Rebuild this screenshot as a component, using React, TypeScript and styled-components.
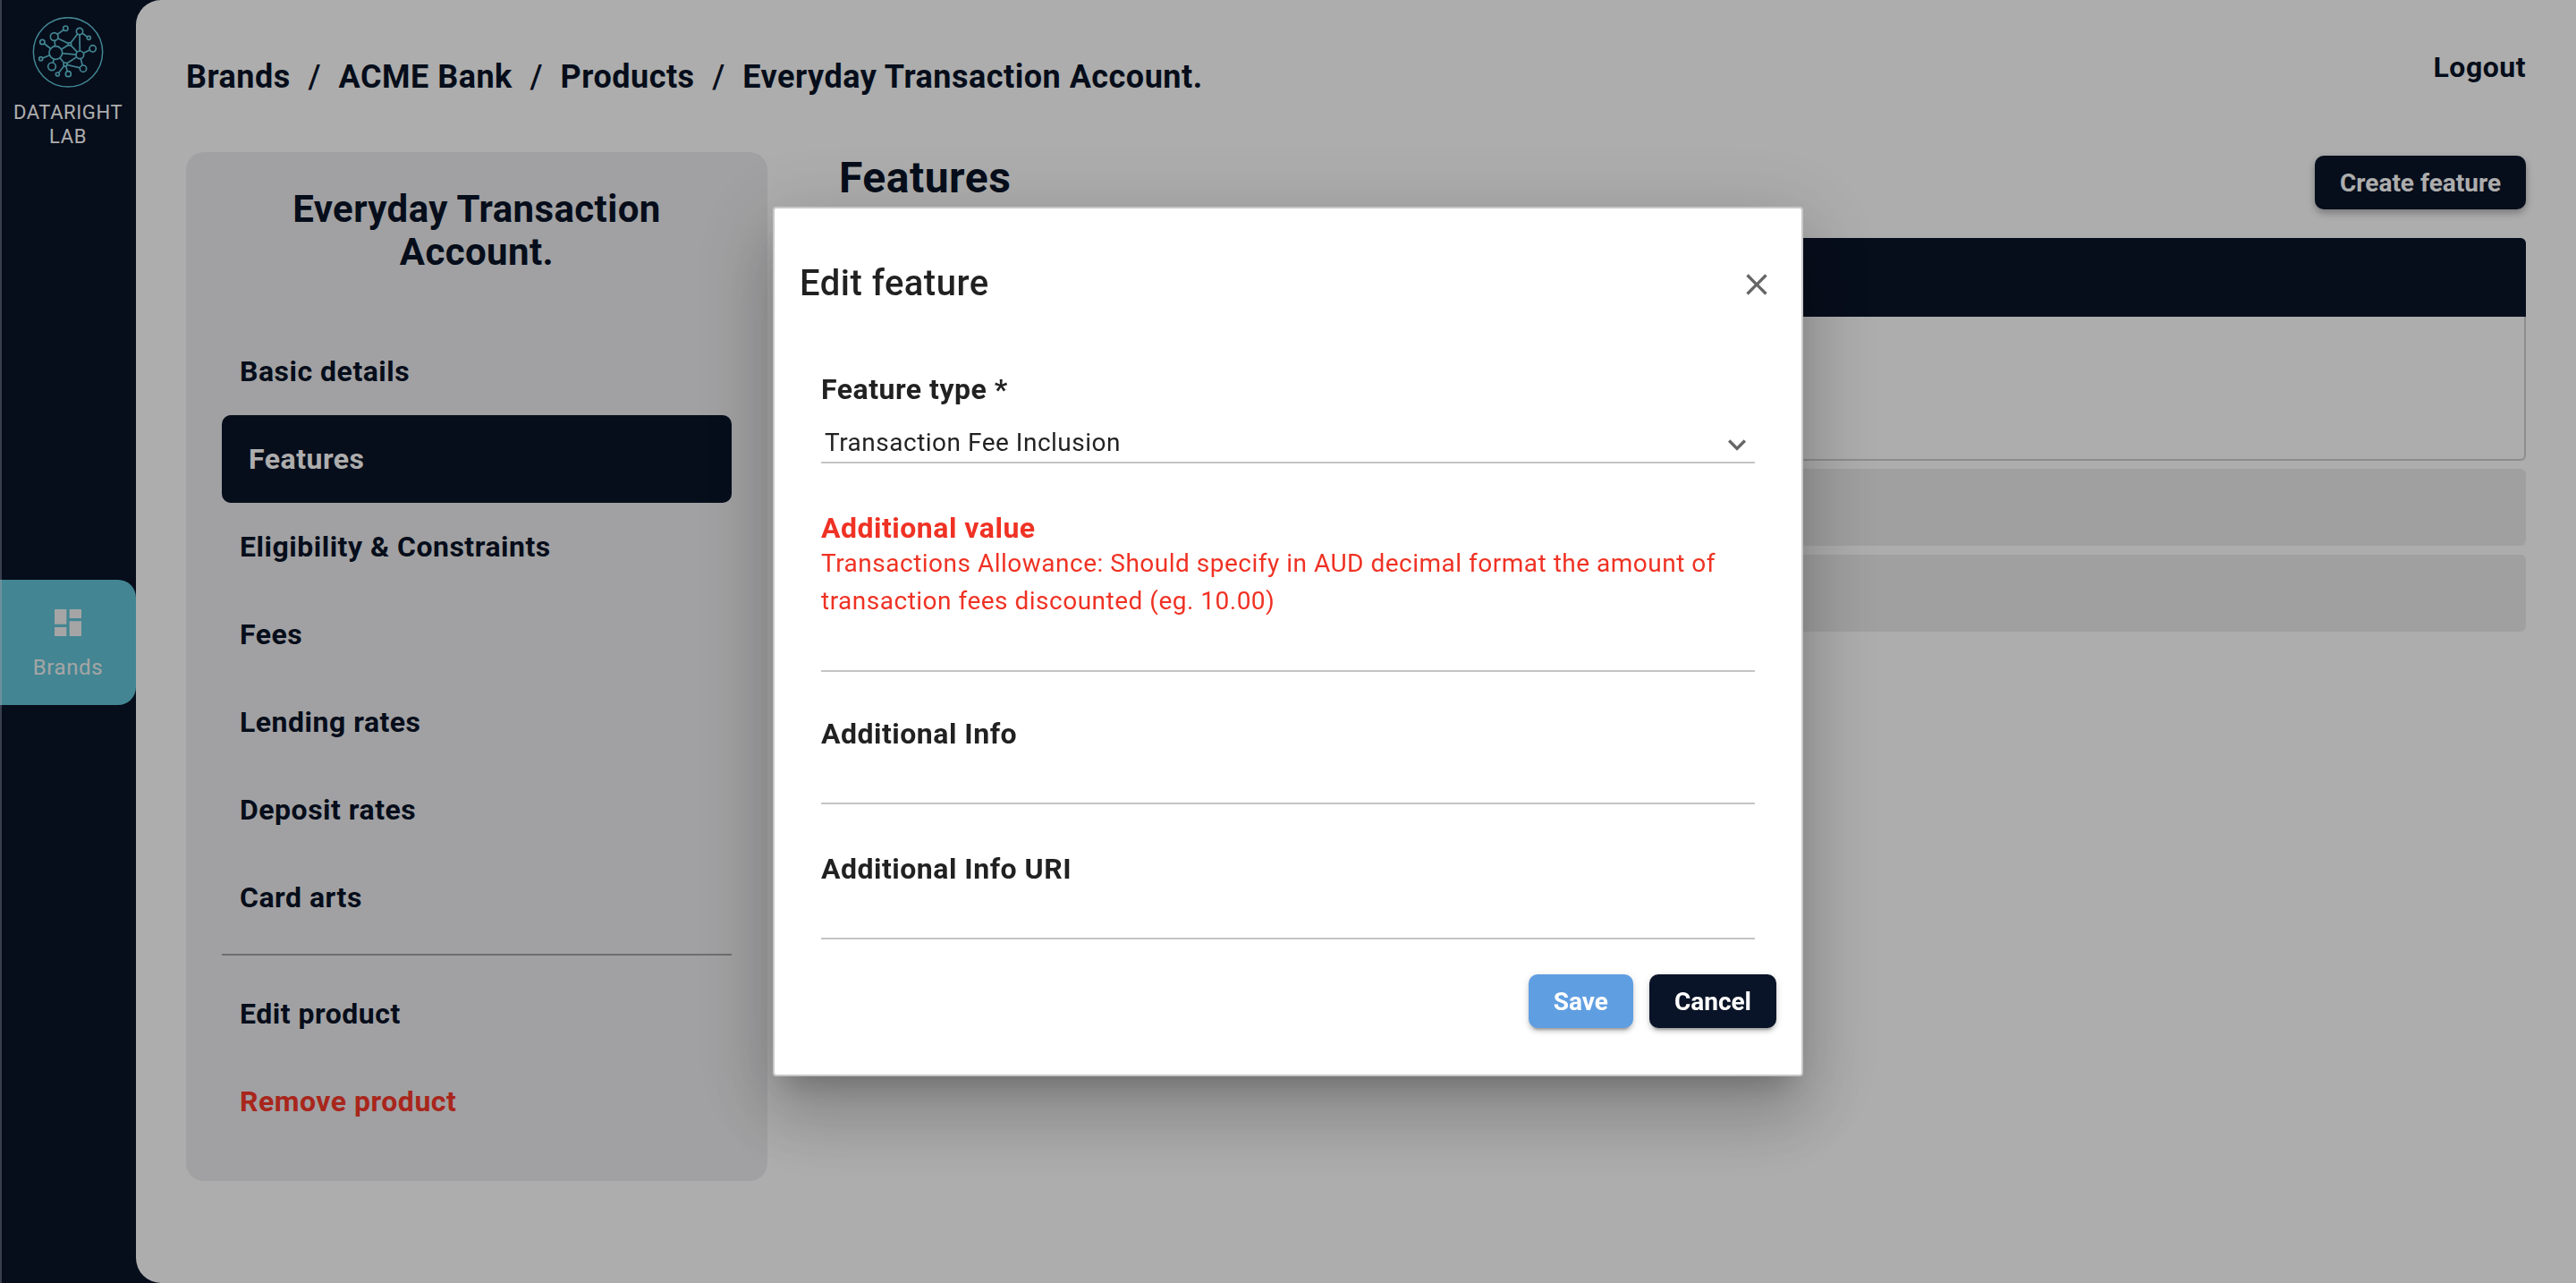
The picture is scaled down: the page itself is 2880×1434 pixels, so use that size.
import styled, { createGlobalStyle } from "styled-components";

const menuTop = ["Basic details", "Features", "Eligibility & Constraints", "Fees", "Lending rates", "Deposit rates", "Card arts"];
const crumbs = ["Brands", "ACME Bank", "Products", "Everyday Transaction Account."];

const Logo = () => {
  const nodes = [
    [187, 180, 22], [268, 187, 13], [182, 126, 13], [267, 108, 11], [220, 98, 8],
    [298, 130, 6], [311, 166, 11], [142, 144, 8], [137, 200, 6], [174, 226, 13],
    [219, 219, 6], [279, 233, 11], [229, 251, 9], [193, 252, 6], [234, 151, 5],
  ];
  const edges = [
    [187, 180, 234, 151], [182, 126, 234, 151], [182, 126, 220, 98], [267, 108, 234, 151],
    [267, 108, 268, 187], [267, 108, 298, 130], [142, 144, 187, 180], [137, 200, 187, 180],
    [187, 180, 268, 187], [234, 151, 268, 187], [268, 187, 311, 166], [268, 187, 219, 219],
    [268, 187, 279, 233], [219, 219, 279, 233], [219, 219, 193, 252], [219, 219, 229, 251],
    [187, 180, 219, 219], [182, 126, 187, 180], [174, 226, 187, 180],
  ];
  return (
    <LogoSvg viewBox="108 60 240 240">
      <circle cx="228" cy="178" r="116" fill="none" stroke="#63c5d8" strokeWidth="4.5" />
      {edges.map((e, i) => (
        <line key={i} x1={e[0]} y1={e[1]} x2={e[2]} y2={e[3]} stroke="#63c5d8" strokeWidth="5" />
      ))}
      {nodes.map((n, i) => (
        <circle key={i} cx={n[0]} cy={n[1]} r={n[2]} fill="#0a1428" stroke="#63c5d8" strokeWidth="5" />
      ))}
    </LogoSvg>
  );
};

const App = () => {
  return (
    <Page>
      <GlobalStyle />
      <SideBar>
        <Brand>
          <Logo />
          <BrandText>DATARIGHT LAB</BrandText>
        </Brand>
        <NavTile>
          <svg width="40" height="40" viewBox="0 0 24 24" fill="currentColor">
            <path d="M3 13h8V3H3v10zm0 8h8v-6H3v6zm10 0h8V11h-8v10zm0-18v6h8V3h-8z" />
          </svg>
          <span>Brands</span>
        </NavTile>
      </SideBar>
      <Main>
        <TopBar>
          <Crumbs>
            {crumbs.map((c, idx) => (
              <span key={c}>
                {idx > 0 && <Slash>/</Slash>}
                {c}
              </span>
            ))}
          </Crumbs>
          <Logout>Logout</Logout>
        </TopBar>
        <Body>
          <Panel>
            <PanelTitle>Everyday Transaction Account.</PanelTitle>
            {menuTop.map((m) => (
              <MenuItem key={m} $active={m === "Features"}>
                {m}
              </MenuItem>
            ))}
            <Divider />
            <MenuItem>Edit product</MenuItem>
            <MenuItem $danger>Remove product</MenuItem>
          </Panel>
          <Content>
            <ContentHead>
              <Heading>Features</Heading>
              <CreateButton>Create feature</CreateButton>
            </ContentHead>
            <TableHead />
            <TableBox />
            <CollapsedRow />
            <CollapsedRow />
          </Content>
        </Body>
      </Main>
      <Backdrop>
        <Dialog>
          <DialogHead>
            <DialogTitle>Edit feature</DialogTitle>
            <svg width="40" height="40" viewBox="0 0 24 24" fill="#666">
              <path d="M19 6.41 17.59 5 12 10.59 6.41 5 5 6.41 10.59 12 5 17.59 6.41 19 12 13.41 17.59 19 19 17.59 13.41 12z" />
            </svg>
          </DialogHead>
          <Form>
            <Field $top={0} $bottom={53}>
              <FieldLabel>Feature type *</FieldLabel>
              <SelectLine>
                <span>Transaction Fee Inclusion</span>
                <svg width="40" height="40" viewBox="0 0 24 24" fill="#666">
                  <path d="M16.59 8.59 12 13.17 7.41 8.59 6 10l6 6 6-6z" />
                </svg>
              </SelectLine>
            </Field>
            <Field $top={0} $bottom={0}>
              <FieldLabel $error>Additional value</FieldLabel>
              <HelpText>
                Transactions Allowance: Should specify in AUD decimal format the amount of transaction fees discounted
                (eg. 10.00)
              </HelpText>
              <InputLine $height={58} />
            </Field>
            <Field $top={50} $bottom={0}>
              <FieldLabel>Additional Info</FieldLabel>
              <InputLine $height={60} />
            </Field>
            <Field $top={53} $bottom={0}>
              <FieldLabel>Additional Info URI</FieldLabel>
              <InputLine $height={60} />
            </Field>
          </Form>
          <Actions>
            <DialogButton $primary>Save</DialogButton>
            <DialogButton>Cancel</DialogButton>
          </Actions>
        </Dialog>
      </Backdrop>
    </Page>
  );
};

const GlobalStyle = createGlobalStyle`
  html, body {
    margin: 0;
    padding: 0;
    height: 100%;
    font-family: Roboto, "Liberation Sans", sans-serif;
    background: #0a1428;
  }
  * {
    box-sizing: border-box;
  }
`;

const Page = styled.div`
  width: 2880px;
  height: 1434px;
  display: flex;
  overflow: hidden;
  background: #0a1428;
`;

const SideBar = styled.aside`
  width: 152px;
  flex: none;
  display: flex;
  flex-direction: column;
  border-left: 2px solid #555e70;
`;

const Brand = styled.div`
  display: flex;
  flex-direction: column;
  align-items: center;
  padding: 19px 2px 0 0;
  height: 648px;
`;

const LogoSvg = styled.svg`
  width: 80px;
  height: 80px;
`;

const BrandText = styled.div`
  margin-top: 13px;
  width: 140px;
  color: #fff;
  font-size: 22px;
  letter-spacing: 0.6px;
  line-height: 27px;
  text-align: center;
`;

const NavTile = styled.div`
  margin-left: -2px;
  width: 152px;
  height: 140px;
  padding: 28px 2px 0 0;
  border-left: 2px solid #9cd8e4;
  border-radius: 0 20px 20px 0;
  background: #63c5d8;
  color: #f4f4f4;
  display: flex;
  flex-direction: column;
  align-items: center;
  gap: 16px;
  font-size: 24px;
  letter-spacing: 0.6px;
  span {
    line-height: 28px;
  }
`;

const Main = styled.main`
  flex: 1;
  min-width: 0;
  background: #fff;
  border-radius: 28px 0 0 28px;
  padding: 0 56px;
`;

const TopBar = styled.header`
  height: 170px;
  display: flex;
  justify-content: space-between;
  color: #0a1428;
  font-weight: 700;
  letter-spacing: 0.5px;
`;

const Crumbs = styled.div`
  padding-top: 65px;
  font-size: 36px;
  line-height: 42px;
`;

const Slash = styled.span`
  margin: 0 19.6px;
  font-weight: 500;
`;

const Logout = styled.div`
  padding-top: 56px;
  font-size: 32px;
  line-height: 38px;
`;

const Body = styled.div`
  display: flex;
  gap: 80px;
`;

const Panel = styled.nav`
  width: 650px;
  height: 1150px;
  flex: none;
  padding: 40px;
  border-radius: 20px;
  background: #eeeef0;
`;

const PanelTitle = styled.h2`
  margin: 0 auto 60px;
  width: 480px;
  color: #0a1428;
  font-size: 42px;
  letter-spacing: 0.4px;
  line-height: 48px;
  font-weight: 700;
  text-align: center;
`;

const MenuItem = styled.div<{ $active?: boolean; $danger?: boolean }>`
  height: 98px;
  display: flex;
  align-items: center;
  padding-left: ${({ $active }) => ($active ? "30px" : "20px")};
  border-radius: 10px;
  font-size: 32px;
  letter-spacing: 0.5px;
  font-weight: 700;
  background: ${({ $active }) => ($active ? "#0a1428" : "transparent")};
  color: ${({ $active, $danger }) => ($active ? "#fff" : $danger ? "#f8382a" : "#0a1428")};
`;

const Divider = styled.hr`
  margin: 14px 0 16px;
  border: 0;
  border-top: 2px solid #a3a3a3;
`;

const Content = styled.section`
  flex: 1;
  min-width: 0;
`;

const ContentHead = styled.div`
  height: 96px;
  display: flex;
  justify-content: space-between;
  align-items: flex-start;
`;

const Heading = styled.h1`
  margin: 0;
  color: #0a1428;
  font-size: 48px;
  letter-spacing: 0.5px;
  line-height: 58px;
  font-weight: 700;
`;

const CreateButton = styled.button`
  width: 236px;
  height: 60px;
  margin-top: 4px;
  border: 0;
  border-radius: 10px;
  background: #0a1428;
  color: #fff;
  font-family: inherit;
  font-size: 28px;
  font-weight: 700;
  box-shadow: 0 4px 8px rgba(0, 0, 0, 0.3);
`;

const TableHead = styled.div`
  height: 88px;
  background: #0a1428;
  border-radius: 6px 6px 0 0;
`;

const TableBox = styled.div`
  height: 161px;
  margin-bottom: 9px;
  border: 2px solid #d0d0d0;
  border-top: 0;
  border-radius: 0 0 6px 6px;
`;

const CollapsedRow = styled.div`
  height: 86px;
  margin-bottom: 10px;
  border-radius: 6px;
  background: #ececec;
`;

const Backdrop = styled.div`
  position: fixed;
  inset: 0;
  display: flex;
  align-items: center;
  justify-content: center;
  background: rgba(0, 0, 0, 0.32);
`;

const Dialog = styled.div`
  width: 1152px;
  height: 972px;
  padding: 0 28px;
  display: flex;
  flex-direction: column;
  background: #fff;
  border: 2px solid #c8c8c8;
  border-radius: 4px;
  box-shadow: 0 22px 30px -14px rgba(0, 0, 0, 0.2), 0 48px 76px 6px rgba(0, 0, 0, 0.14),
    0 18px 92px 16px rgba(0, 0, 0, 0.12);
`;

const DialogHead = styled.div`
  height: 183px;
  flex: none;
  padding-bottom: 15px;
  display: flex;
  align-items: center;
  justify-content: space-between;
  color: rgba(0, 0, 0, 0.87);
  svg {
    margin: 2px 2px 0 0;
  }
`;

const DialogTitle = styled.h2`
  margin: 0;
  font-size: 40px;
  letter-spacing: 0.5px;
  line-height: 48px;
  font-weight: 500;
`;

const Form = styled.div`
  flex: 1;
  padding: 0 0 0 24px;
  width: 1068px;
`;

const Field = styled.div<{ $top: number; $bottom: number }>`
  margin-top: ${({ $top }) => $top}px;
  margin-bottom: ${({ $bottom }) => $bottom}px;
`;

const FieldLabel = styled.div<{ $error?: boolean }>`
  font-size: 32px;
  letter-spacing: 0.5px;
  line-height: 38px;
  font-weight: 700;
  color: ${({ $error }) => ($error ? "#ef3224" : "rgba(0, 0, 0, 0.87)")};
`;

const HelpText = styled.div`
  width: 1020px;
  color: #ef3224;
  font-size: 28px;
  line-height: 42px;
  letter-spacing: 0.5px;
`;

const SelectLine = styled.div`
  margin-top: 18px;
  height: 46px;
  display: flex;
  align-items: center;
  justify-content: space-between;
  padding: 0 0 0 4px;
  border-bottom: 2px solid #c4c4c4;
  font-size: 28px;
  letter-spacing: 0.5px;
  color: rgba(0, 0, 0, 0.87);
  svg {
    margin: 6px 0 0 0;
  }
`;

const InputLine = styled.div<{ $height: number }>`
  height: ${({ $height }) => $height}px;
  border-bottom: 2px solid #c4c4c4;
`;

const Actions = styled.div`
  height: 112px;
  flex: none;
  display: flex;
  justify-content: flex-end;
  gap: 18px;
`;

const DialogButton = styled.button<{ $primary?: boolean }>`
  height: 60px;
  padding: 0 28px;
  border: 0;
  border-radius: 10px;
  font-family: inherit;
  font-size: 28px;
  font-weight: 700;
  color: #fff;
  background: ${({ $primary }) => ($primary ? "#609ee2" : "#0a1428")};
  box-shadow: 0 6px 2px -4px rgba(0, 0, 0, 0.2), 0 4px 4px 0 rgba(0, 0, 0, 0.14), 0 2px 10px 0 rgba(0, 0, 0, 0.12);
`;

export default App;
